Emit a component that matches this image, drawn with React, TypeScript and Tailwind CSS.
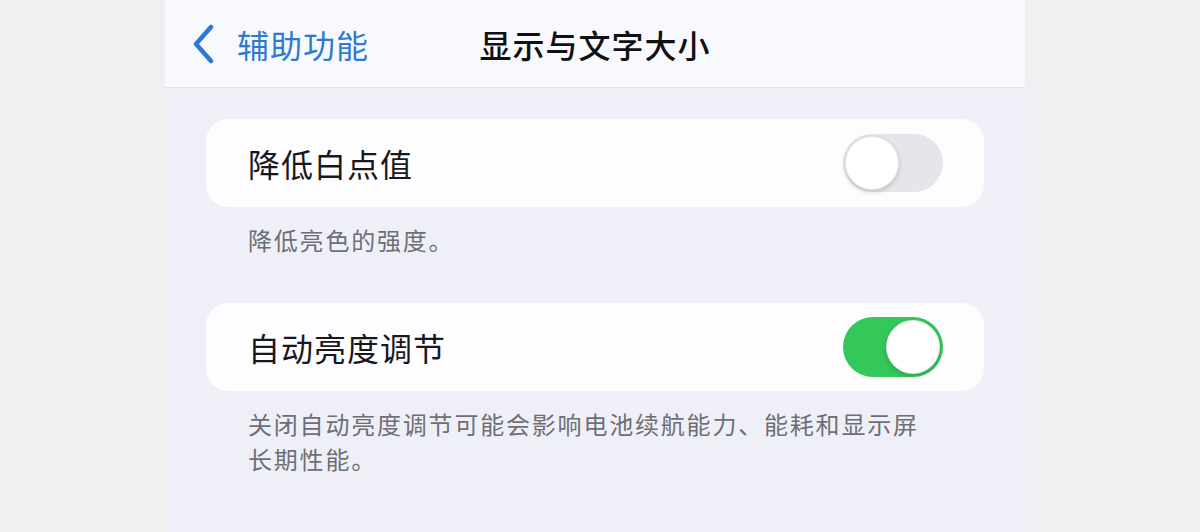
import React from "react"

const font = { fontFamily: '"Noto Sans CJK SC", "Noto Sans", sans-serif' }

function Toggle({ on }: { on: boolean }) {
  return (
    <div
      className={
        on
          ? "w-[100px] h-[60px] rounded-full bg-[#34c759] p-[3px] flex justify-end"
          : "w-[100px] h-[58px] rounded-full bg-[#e6e6ea] p-[2px] flex justify-start"
      }
    >
      <div className="h-full aspect-square rounded-full bg-white shadow-[0_2px_5px_rgba(0,0,0,0.18)] border border-[#d8d8dc]/60" />
    </div>
  )
}

function Row({ label, on }: { label: string; on: boolean }) {
  return (
    <div className="h-[88px] rounded-[22px] bg-[#fdfdff] flex items-center justify-between pl-[42px] pr-[41px]">
      <span className="text-[32px] tracking-[1px] text-[#18181c]">{label}</span>
      <Toggle on={on} />
    </div>
  )
}

export default function App() {
  return (
    <div className="w-[1200px] h-[532px] bg-[#f0f0f2] flex overflow-hidden" style={font}>
      <div className="ml-[165px] w-[860px] h-full bg-[#eff0f7] flex flex-col">
        {/* nav bar */}
        <div className="h-[88px] bg-[#f8f9fd] border-b border-[#e2e3e8] relative flex items-center justify-center">
          <div className="absolute left-[26px] top-0 h-full flex items-center gap-[20px] text-[#2d79d6]">
            <svg width="26" height="40" viewBox="0 0 26 40" fill="none">
              <path d="M20 3 L5 20 L20 37" stroke="currentColor" strokeWidth="4.5" strokeLinecap="round" strokeLinejoin="round" />
            </svg>
            <span className="text-[32px] tracking-[1px]">辅助功能</span>
          </div>
          <span className="text-[32px] tracking-[1px] font-medium text-[#111114]">显示与文字大小</span>
        </div>

        {/* settings */}
        <div className="px-[41px] pt-[31px] flex flex-col">
          <Row label="降低白点值" on={false} />
          <p className="mt-[15px] pl-[42px] text-[24px] leading-[35px] tracking-[1.8px] text-[#6e6e76]">
            降低亮色的强度。
          </p>
          <div className="mt-[46px]">
            <Row label="自动亮度调节" on={true} />
          </div>
          <p className="mt-[15px] pl-[42px] text-[24px] leading-[35px] tracking-[1.8px] text-[#6e6e76]">
            关闭自动亮度调节可能会影响电池续航能力、能耗和显示屏
            <br />
            长期性能。
          </p>
        </div>
      </div>
    </div>
  )
}
